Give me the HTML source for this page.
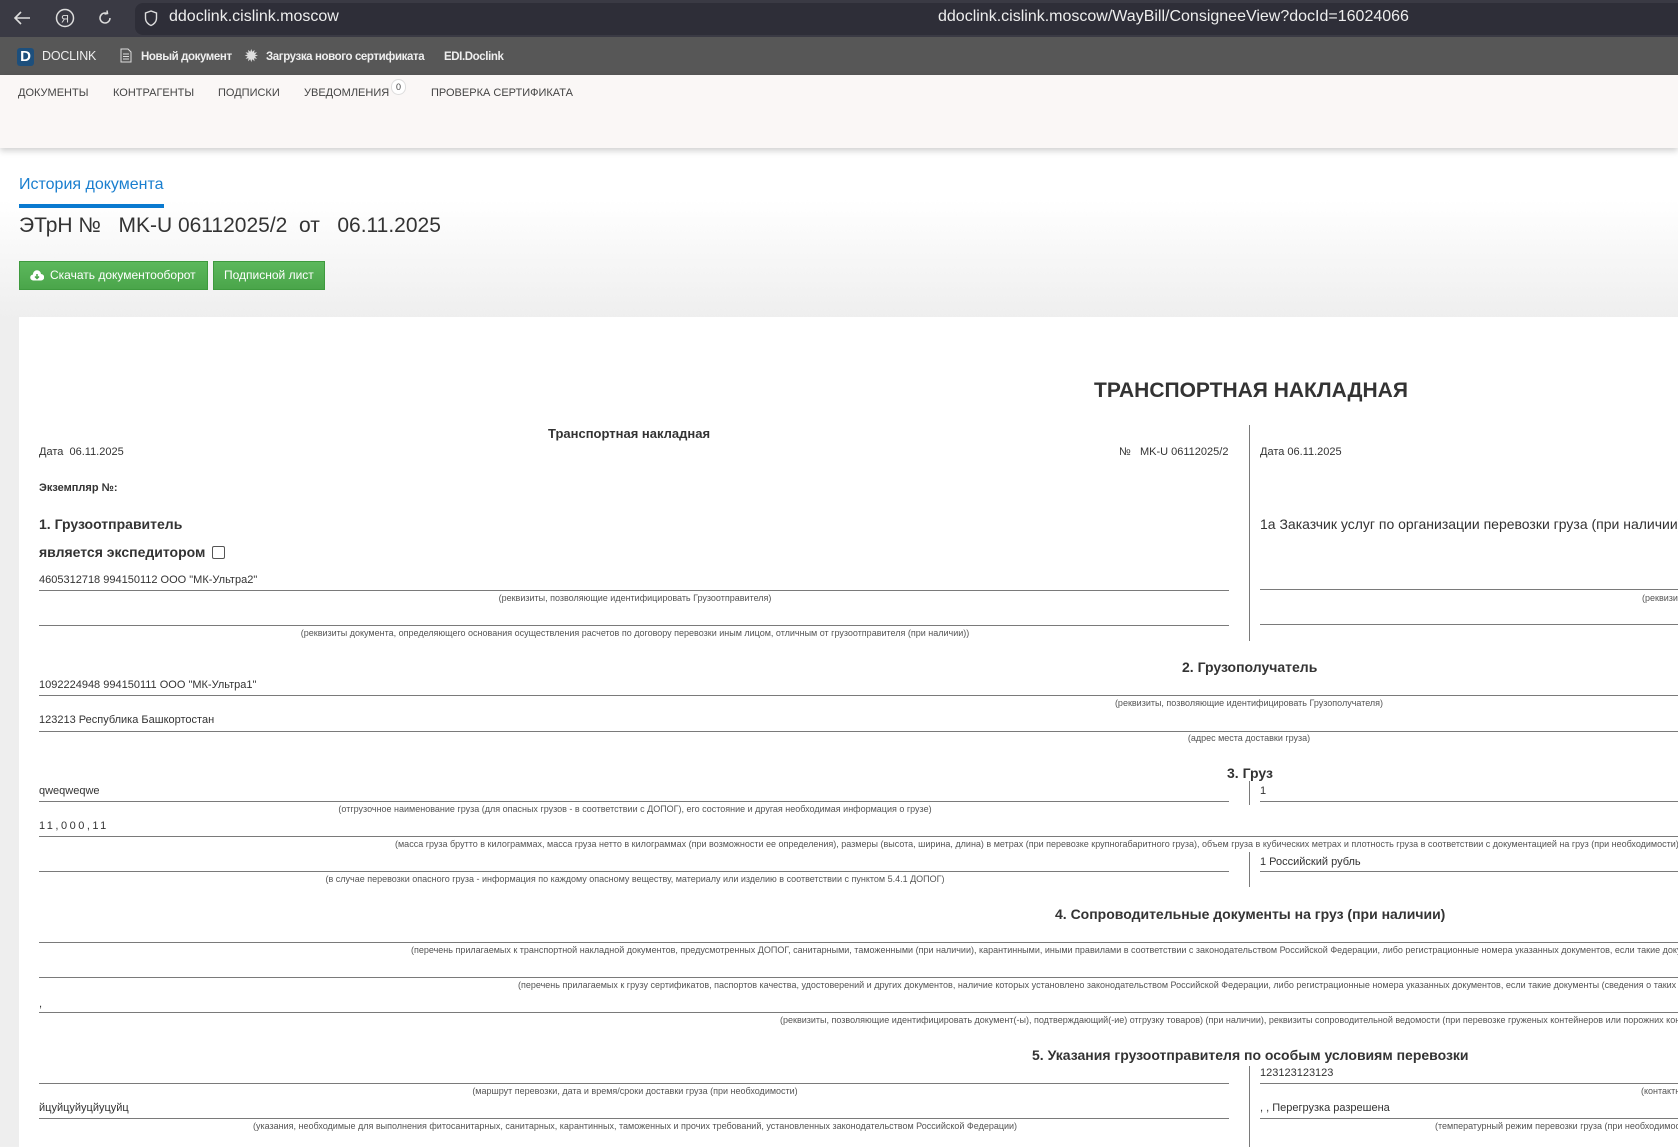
<!DOCTYPE html>
<html><head><meta charset="utf-8"><style>
*{margin:0;padding:0;box-sizing:border-box}
html,body{width:1678px;height:1147px;overflow:hidden}
body{font-family:"Liberation Sans",Arial,sans-serif;background:linear-gradient(#fff 150px,#fff 200px,#eeeeee 320px,#eeeeee);position:relative;color:#333}
.a{position:absolute;white-space:nowrap}
.top{position:absolute;left:0;top:0;width:1678px;height:37px;background:#3a3a44}
.url{position:absolute;left:135px;top:3px;width:1543px;height:32px;background:#2e2e38;border-radius:8px 0 0 8px}
.bar{position:absolute;left:0;top:37px;width:1678px;height:38px;background:#575757;color:#eee;font-size:11.5px;font-weight:bold;letter-spacing:-0.4px}
.nav{position:absolute;left:0;top:75px;width:1678px;height:73px;background:#faf7f6;box-shadow:0 3px 6px rgba(0,0,0,.18);font-size:11px;color:#444}
.btn{position:absolute;top:261px;height:29px;background:linear-gradient(#5cb85c,#4aa54a);border:1px solid #3e9a3e;color:#fff;font-size:12px;line-height:27px;padding:0 10px}
.card{position:absolute;left:19px;top:317px;width:1659px;height:830px;background:#fff}
.t{position:absolute;white-space:nowrap;font-size:11px;color:#333;line-height:14px}
.b{font-weight:bold}
.h{font-size:14px;line-height:16px}
.c{position:absolute;white-space:nowrap;font-size:9px;color:#555;line-height:10px;transform:translateX(-50%)}
.r{position:absolute;white-space:nowrap;font-size:9px;color:#555;line-height:10px}
.l{position:absolute;height:1px;background:#7a7a7a}
.v{position:absolute;width:1px;background:#7a7a7a;left:1249px}
</style></head><body>
<div class="top"><div class="url"></div>
<svg class="a" style="left:13px;top:10px" width="18" height="16" viewBox="0 0 18 16"><path d="M17 8H2M8 2L2 8l6 6" stroke="#ddd" stroke-width="1.6" fill="none"/></svg>
<svg class="a" style="left:55px;top:8px" width="20" height="20"><circle cx="10" cy="10" r="8.5" stroke="#ddd" stroke-width="1.5" fill="none"/><text x="6" y="14.5" font-size="11" fill="#ddd" font-family="Liberation Sans">Я</text></svg>
<svg class="a" style="left:96px;top:9px" width="18" height="18"><path d="M14 9a5 5 0 1 1-3-4.6M11 1.5l0.5 3-3 .5" stroke="#ddd" stroke-width="1.5" fill="none"/></svg>
<svg class="a" style="left:144px;top:10px" width="14" height="17"><path d="M7 1L1.5 3v5c0 4 3 6.5 5.5 7.5 2.5-1 5.5-3.5 5.5-7.5V3z" stroke="#ddd" stroke-width="1.4" fill="none"/></svg>
<div class="a" style="left:169px;top:8px;font-size:16px;color:#eee">ddoclink.cislink.moscow</div>
<div class="a" style="left:938px;top:8px;font-size:16px;color:#eee">ddoclink.cislink.moscow/WayBill/ConsigneeView?docId=16024066</div>
</div>
<div class="bar">
<div class="a" style="left:17px;top:11px;width:17px;height:18px;background:#1d4f7c;border-radius:3px;color:#fff;font-size:15px;text-align:center;line-height:18px;letter-spacing:0">D</div>
<div class="a" style="left:42px;top:12px;font-weight:normal;font-size:12.5px;letter-spacing:-0.2px">DOCLINK</div>
<svg class="a" style="left:120px;top:11px" width="12" height="15"><path d="M1 1h7l3 3v10H1z M3 6h6M3 8.5h6M3 11h6" stroke="#ddd" fill="none"/></svg>
<div class="a" style="left:141px;top:14px">Новый документ</div>
<div class="a" style="left:245px;top:10px;font-size:15px;color:#ddd">✹</div>
<div class="a" style="left:266px;top:14px">Загрузка нового сертификата</div>
<div class="a" style="left:444px;top:14px">EDI.Doclink</div>
</div>
<div class="nav">
<div class="a" style="left:18px;top:12px">ДОКУМЕНТЫ</div>
<div class="a" style="left:113px;top:12px">КОНТРАГЕНТЫ</div>
<div class="a" style="left:218px;top:12px">ПОДПИСКИ</div>
<div class="a" style="left:304px;top:12px">УВЕДОМЛЕНИЯ</div>
<div class="a" style="left:391px;top:4px;width:15px;height:16px;border-radius:8px;background:#fff;border:1px solid #ddd;font-size:9px;text-align:center;line-height:14px">0</div>
<div class="a" style="left:431px;top:12px">ПРОВЕРКА СЕРТИФИКАТА</div>
</div>
<div class="a" style="left:19px;top:176px;font-size:16px;color:#1a7fcf">История документа</div>
<div class="a" style="left:19px;top:204px;width:145px;height:4px;background:#0a7ad0"></div>
<div class="a" style="left:19px;top:214px;font-size:21px;color:#333">ЭТрН №&nbsp;&nbsp; MK-U 06112025/2&nbsp; от &nbsp; 06.11.2025</div>
<div class="btn" style="left:19px;width:189px"><svg style="vertical-align:-2px;margin-right:6px" width="14" height="11"><path d="M3.5 10.5a3 3 0 0 1-.5-6A4 4 0 0 1 11 4a3 3 0 0 1 0 6.5z" fill="#fff"/><path d="M7 4v4M5 6.5l2 2 2-2" stroke="#4aa54a" stroke-width="1.5" fill="none"/></svg>Скачать документооборот</div>
<div class="btn" style="left:213px;width:112px">Подписной лист</div>
<div class="card"></div>

<div class="t b" style="left:1094px;top:378px;font-size:21px;line-height:25px">ТРАНСПОРТНАЯ НАКЛАДНАЯ</div>
<div class="t b" style="left:548px;top:426px;font-size:13px;line-height:16px">Транспортная накладная</div>
<div class="t" style="left:39px;top:445px">Дата&nbsp; 06.11.2025</div>
<div class="t" style="left:1119px;top:445px">№&nbsp;&nbsp; MK-U 06112025/2</div>
<div class="v" style="top:425px;height:216px"></div>
<div class="t" style="left:1260px;top:445px">Дата 06.11.2025</div>
<div class="t b" style="left:39px;top:481px">Экземпляр №:</div>
<div class="t b" style="left:39px;top:516px;font-size:14px;line-height:17px">1. Грузоотправитель</div>
<div class="t" style="left:1260px;top:516px;font-size:14px;line-height:17px">1а Заказчик услуг по организации перевозки груза (при наличии)</div>
<div class="t b" style="left:39px;top:544px;font-size:14px;line-height:17px">является экспедитором <span style="display:inline-block;width:13px;height:13px;border:1px solid #555;border-radius:2px;vertical-align:-2px;margin-left:3px"></span></div>
<div class="t" style="left:39px;top:573px">4605312718 994150112 ООО "МК-Ультра2"</div>
<div class="l" style="left:39px;top:590px;width:1190px"></div>
<div class="l" style="left:1260px;top:589px;width:418px"></div>
<div class="c" style="left:635px;top:593px">(реквизиты, позволяющие идентифицировать Грузоотправителя)</div>
<div class="r" style="left:1642px;top:593px">(реквизиты</div>
<div class="l" style="left:39px;top:625px;width:1190px"></div>
<div class="l" style="left:1260px;top:624px;width:418px"></div>
<div class="c" style="left:635px;top:628px">(реквизиты документа, определяющего основания осуществления расчетов по договору перевозки иным лицом, отличным от грузоотправителя (при наличии))</div>

<div class="t b h" style="left:1182px;top:659px">2. Грузополучатель</div>
<div class="t" style="left:39px;top:678px">1092224948 994150111 ООО "МК-Ультра1"</div>
<div class="l" style="left:39px;top:695px;width:1639px"></div>
<div class="c" style="left:1249px;top:698px">(реквизиты, позволяющие идентифицировать Грузополучателя)</div>
<div class="t" style="left:39px;top:713px">123213 Республика Башкортостан</div>
<div class="l" style="left:39px;top:731px;width:1639px"></div>
<div class="c" style="left:1249px;top:733px">(адрес места доставки груза)</div>

<div class="t b h" style="left:1227px;top:765px">3. Груз</div>
<div class="v" style="top:781px;height:24px"></div>
<div class="t" style="left:39px;top:784px">qweqweqwe</div>
<div class="t" style="left:1260px;top:784px">1</div>
<div class="l" style="left:39px;top:801px;width:1190px"></div>
<div class="l" style="left:1260px;top:801px;width:418px"></div>
<div class="c" style="left:635px;top:804px">(отгрузочное наименование груза (для опасных грузов - в соответствии с ДОПОГ), его состояние и другая необходимая информация о грузе)</div>
<div class="t" style="left:39px;top:819px;letter-spacing:2.5px">11,000,11</div>
<div class="l" style="left:39px;top:836px;width:1639px"></div>
<div class="r" style="left:395px;top:839px">(масса груза брутто в килограммах, масса груза нетто в килограммах (при возможности ее определения), размеры (высота, ширина, длина) в метрах (при перевозке крупногабаритного груза), объем груза в кубических метрах и плотность груза в соответствии с документацией на груз (при необходимости))</div>
<div class="v" style="top:852px;height:35px"></div>
<div class="t" style="left:1260px;top:855px">1 Российский рубль</div>
<div class="l" style="left:39px;top:871px;width:1190px"></div>
<div class="l" style="left:1260px;top:871px;width:418px"></div>
<div class="c" style="left:635px;top:874px">(в случае перевозки опасного груза - информация по каждому опасному веществу, материалу или изделию в соответствии с пунктом 5.4.1 ДОПОГ)</div>

<div class="t b h" style="left:1055px;top:906px">4. Сопроводительные документы на груз (при наличии)</div>
<div class="l" style="left:39px;top:942px;width:1639px"></div>
<div class="r" style="left:411px;top:945px">(перечень прилагаемых к транспортной накладной документов, предусмотренных ДОПОГ, санитарными, таможенными (при наличии), карантинными, иными правилами в соответствии с законодательством Российской Федерации, либо регистрационные номера указанных документов, если такие документы</div>
<div class="l" style="left:39px;top:977px;width:1639px"></div>
<div class="r" style="left:518px;top:980px">(перечень прилагаемых к грузу сертификатов, паспортов качества, удостоверений и других документов, наличие которых установлено законодательством Российской Федерации, либо регистрационные номера указанных документов, если такие документы (сведения о таких</div>
<div class="t" style="left:39px;top:997px">,</div>
<div class="l" style="left:39px;top:1012px;width:1639px"></div>
<div class="r" style="left:780px;top:1015px">(реквизиты, позволяющие идентифицировать документ(-ы), подтверждающий(-ие) отгрузку товаров) (при наличии), реквизиты сопроводительной ведомости (при перевозке груженых контейнеров или порожних контейнеров)</div>

<div class="t b h" style="left:1032px;top:1047px">5. Указания грузоотправителя по особым условиям перевозки</div>
<div class="v" style="top:1066px;height:81px"></div>
<div class="t" style="left:1260px;top:1066px">123123123123</div>
<div class="l" style="left:39px;top:1083px;width:1190px"></div>
<div class="l" style="left:1260px;top:1083px;width:418px"></div>
<div class="c" style="left:635px;top:1086px">(маршрут перевозки, дата и время/сроки доставки груза (при необходимости)</div>
<div class="r" style="left:1641px;top:1086px">(контактная</div>
<div class="t" style="left:39px;top:1101px">йцуйцуйуцйуцуйц</div>
<div class="t" style="left:1260px;top:1101px">, , Перегрузка разрешена</div>
<div class="l" style="left:39px;top:1118px;width:1190px"></div>
<div class="l" style="left:1260px;top:1118px;width:418px"></div>
<div class="c" style="left:635px;top:1121px">(указания, необходимые для выполнения фитосанитарных, санитарных, карантинных, таможенных и прочих требований, установленных законодательством Российской Федерации)</div>
<div class="r" style="left:1435px;top:1121px">(температурный режим перевозки груза (при необходимости)</div>
</body></html>
